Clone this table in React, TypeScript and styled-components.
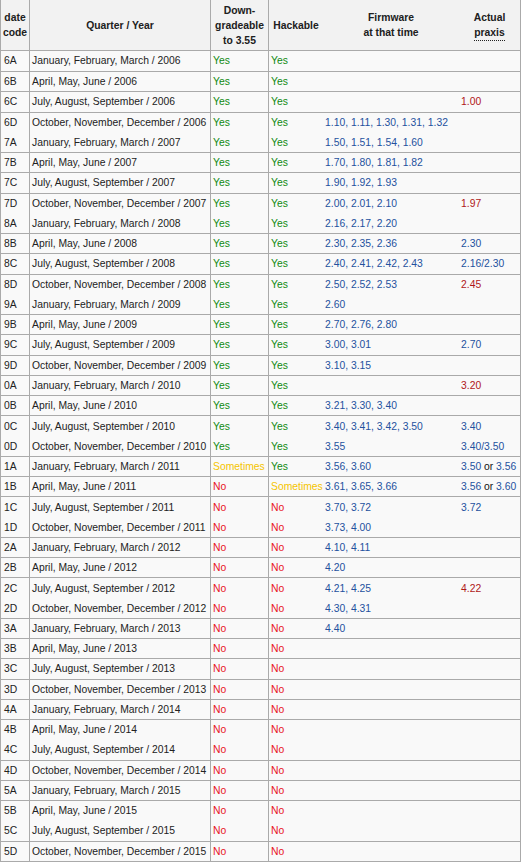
import React from 'react';
import styled, { createGlobalStyle } from 'styled-components';

const Global = createGlobalStyle`
  html, body { margin: 0; padding: 0; background: #ffffff; }
  body { font-family: "Liberation Sans", Arial, sans-serif; }
`;

const COLS = '29px 181px 58px 55px 136px 61px';
const LINE = '#aaaaaa';

const Table = styled.div`
  width: 521px;
  box-sizing: border-box;
  border-right: 1px solid ${LINE};
  background: #f9f9f9;
  color: #222222;
  font-size: 10.35px;
`;

const HeadRow = styled.div`
  display: grid;
  grid-template-columns: ${COLS};
  height: 51px;
  background: #f2f2f2;
`;

const Th = styled.div<{ $line: boolean }>`
  box-sizing: border-box;
  border-left: ${p => (p.$line ? `1px solid ${LINE}` : 'none')};
  border-bottom: 1px solid ${LINE};
  display: flex;
  align-items: center;
  justify-content: center;
  text-align: center;
  font-weight: bold;
  line-height: 15px;
  color: #202020;
  padding: 0 1px;
  white-space: nowrap;
`;

const Abbr = styled.span`
  border-bottom: 1px dotted #222;
`;

const Row = styled.div<{ $h: number }>`
  display: grid;
  grid-template-columns: ${COLS};
  height: ${p => p.$h}px;
`;

const Td = styled.div<{ $line: boolean; $rule: boolean }>`
  box-sizing: border-box;
  min-width: 0;
  border-left: ${p => (p.$line ? `1px solid ${LINE}` : 'none')};
  border-bottom: ${p => (p.$rule ? `1px solid ${LINE}` : 'none')};
  display: flex;
  align-items: center;
  padding: 0 2px;
  white-space: nowrap;
  line-height: 12px;
`;

const CodeTd = styled(Td)`
  padding-left: 3px;
`;

type Verdict = 'Y' | 'N' | 'S';

const VerdictText = styled.span<{ $v: Verdict }>`
  color: ${p => (p.$v === 'Y' ? '#118a11' : p.$v === 'N' ? '#e8141c' : '#f5c400')};
`;

const Fw = styled.span`
  color: #24519e;
`;

const Praxis = styled.span<{ $tone: 'red' | 'blue' }>`
  color: ${p => (p.$tone === 'red' ? '#b01818' : '#24519e')};
`;

const Or = styled.span`
  color: #111111;
`;

const QUARTERS: Record<string, string> = {
  A: 'January, February, March',
  B: 'April, May, June',
  C: 'July, August, September',
  D: 'October, November, December',
};

type RowData = [string, Verdict, Verdict, string, string, ('red' | 'blue')?];

const DATA: RowData[] = [
  ['6A', 'Y', 'Y', '', ''],
  ['6B', 'Y', 'Y', '', ''],
  ['6C', 'Y', 'Y', '', '1.00', 'red'],
  ['6D', 'Y', 'Y', '1.10, 1.11, 1.30, 1.31, 1.32', ''],
  ['7A', 'Y', 'Y', '1.50, 1.51, 1.54, 1.60', ''],
  ['7B', 'Y', 'Y', '1.70, 1.80, 1.81, 1.82', ''],
  ['7C', 'Y', 'Y', '1.90, 1.92, 1.93', ''],
  ['7D', 'Y', 'Y', '2.00, 2.01, 2.10', '1.97', 'red'],
  ['8A', 'Y', 'Y', '2.16, 2.17, 2.20', ''],
  ['8B', 'Y', 'Y', '2.30, 2.35, 2.36', '2.30', 'blue'],
  ['8C', 'Y', 'Y', '2.40, 2.41, 2.42, 2.43', '2.16/2.30', 'blue'],
  ['8D', 'Y', 'Y', '2.50, 2.52, 2.53', '2.45', 'red'],
  ['9A', 'Y', 'Y', '2.60', ''],
  ['9B', 'Y', 'Y', '2.70, 2.76, 2.80', ''],
  ['9C', 'Y', 'Y', '3.00, 3.01', '2.70', 'blue'],
  ['9D', 'Y', 'Y', '3.10, 3.15', ''],
  ['0A', 'Y', 'Y', '', '3.20', 'red'],
  ['0B', 'Y', 'Y', '3.21, 3.30, 3.40', ''],
  ['0C', 'Y', 'Y', '3.40, 3.41, 3.42, 3.50', '3.40', 'blue'],
  ['0D', 'Y', 'Y', '3.55', '3.40/3.50', 'blue'],
  ['1A', 'S', 'Y', '3.56, 3.60', '3.50 or 3.56', 'blue'],
  ['1B', 'N', 'S', '3.61, 3.65, 3.66', '3.56 or 3.60', 'blue'],
  ['1C', 'N', 'N', '3.70, 3.72', '3.72', 'blue'],
  ['1D', 'N', 'N', '3.73, 4.00', ''],
  ['2A', 'N', 'N', '4.10, 4.11', ''],
  ['2B', 'N', 'N', '4.20', ''],
  ['2C', 'N', 'N', '4.21, 4.25', '4.22', 'red'],
  ['2D', 'N', 'N', '4.30, 4.31', ''],
  ['3A', 'N', 'N', '4.40', ''],
  ['3B', 'N', 'N', '', ''],
  ['3C', 'N', 'N', '', ''],
  ['3D', 'N', 'N', '', ''],
  ['4A', 'N', 'N', '', ''],
  ['4B', 'N', 'N', '', ''],
  ['4C', 'N', 'N', '', ''],
  ['4D', 'N', 'N', '', ''],
  ['5A', 'N', 'N', '', ''],
  ['5B', 'N', 'N', '', ''],
  ['5C', 'N', 'N', '', ''],
  ['5D', 'N', 'N', '', ''],
];

// rows whose lower rule is lost in the reference picture
const NO_RULE = new Set([4, 8, 12, 19, 23, 27, 34, 38]);

const yearOf = (code: string) => {
  const d = Number(code[0]);
  return d >= 6 ? 2000 + d : 2010 + d;
};

const lineAt = (i: number) => (i === 0 ? 50 : Math.round(71 + ((i - 1) * 790) / 39));

const verdictWord = (v: Verdict) => (v === 'Y' ? 'Yes' : v === 'N' ? 'No' : 'Sometimes');

const PraxisValue: React.FC<{ text: string; tone: 'red' | 'blue' }> = ({ text, tone }) => {
  if (text.includes(' or ')) {
    const [a, b] = text.split(' or ');
    return (
      <Praxis $tone={tone}>
        {a} <Or>or</Or> {b}
      </Praxis>
    );
  }
  return <Praxis $tone={tone}>{text}</Praxis>;
};

export default function App() {
  return (
    <>
      <Global />
      <Table>
        <HeadRow>
          <Th $line>
            date
            <br />
            code
          </Th>
          <Th $line>Quarter / Year</Th>
          <Th $line>
            Down-
            <br />
            gradeable
            <br />
            to 3.55
          </Th>
          <Th $line>Hackable</Th>
          <Th $line={false}>
            Firmware
            <br />
            at that time
          </Th>
          <Th $line={false}>
            <Abbr>
              Actual
              <br />
              praxis
            </Abbr>
          </Th>
        </HeadRow>
        {DATA.map(([code, down, hack, fw, praxis, tone], idx) => {
          const i = idx + 1;
          const h = lineAt(i) - lineAt(i - 1);
          const rule = !NO_RULE.has(i);
          return (
            <Row key={code} $h={h}>
              <CodeTd $line $rule={rule}>{code}</CodeTd>
              <Td $line $rule={rule}>
                {QUARTERS[code[1]]} / {yearOf(code)}
              </Td>
              <Td $line $rule={rule}>
                <VerdictText $v={down}>{verdictWord(down)}</VerdictText>
              </Td>
              <Td $line $rule={rule}>
                <VerdictText $v={hack}>{verdictWord(hack)}</VerdictText>
              </Td>
              <Td $line={false} $rule={rule}>
                {fw && <Fw>{fw}</Fw>}
              </Td>
              <Td $line={false} $rule={rule}>
                {praxis && <PraxisValue text={praxis} tone={tone || 'blue'} />}
              </Td>
            </Row>
          );
        })}
      </Table>
    </>
  );
}
